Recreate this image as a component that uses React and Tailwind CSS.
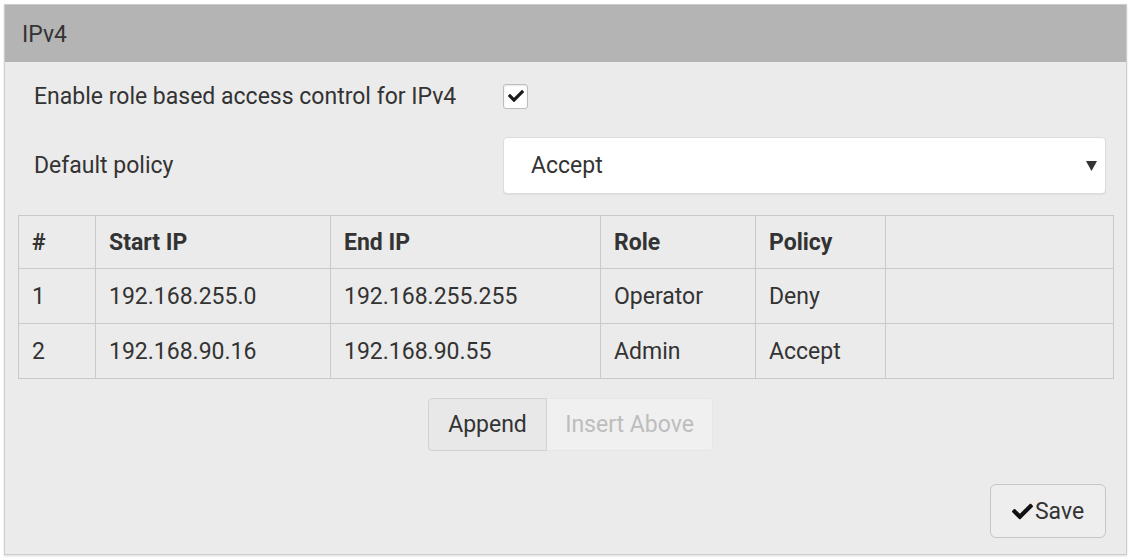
import React from 'react';

const rows = [
  { id: 1, start: '192.168.255.0', end: '192.168.255.255', role: 'Operator', policy: 'Deny' },
  { id: 2, start: '192.168.90.16', end: '192.168.90.55', role: 'Admin', policy: 'Accept' },
];

function CheckIcon({ className }) {
  // heavy check mark, font-awesome style
  return (
    <svg viewBox="0 0 512 512" className={className} fill="currentColor">
      <path d="M173.9 439.4l-166.4-166.4c-10-10-10-26.2 0-36.2l36.2-36.2c10-10 26.2-10 36.2 0L192 312.7 432.1 72.6c10-10 26.2-10 36.2 0l36.2 36.2c10 10 10 26.2 0 36.2l-294.4 294.4c-10 10-26.2 10-36.2 0z" />
    </svg>
  );
}

export default function App() {
  const cell = 'border border-[#c9c9c9] px-[13px] text-left align-middle';

  return (
    <div className="w-[1131px] h-[559px] bg-white p-[4px] text-[#333] font-['Roboto',sans-serif] text-[23px] leading-none">
      <div className="h-full flex flex-col border border-[#cdcdcd] bg-[#ebebeb] shadow-[0_1px_2px_rgba(0,0,0,0.15)]">
        {/* panel title */}
        <div className="h-[57px] shrink-0 bg-[#b4b4b4] flex items-center px-[17px] pt-[2px] text-[#333]">IPv4</div>

        <div className="flex flex-col px-[13px]">
          {/* enable toggle */}
          <div className="grid grid-cols-[469px_1fr] items-center h-[68px] pl-[16px] pr-[7px]">
            <span>Enable role based access control for IPv4</span>
            <div className="w-[25px] h-[25px] bg-white border border-[#bdbdbd] rounded-[3px] flex items-center justify-center shadow-[inset_0_1px_2px_rgba(0,0,0,0.1)]">
              <CheckIcon className="w-[16px] h-[16px] text-[#1a1a1a]" />
            </div>
          </div>

          {/* default policy */}
          <div className="grid grid-cols-[469px_1fr] items-center pl-[16px] pr-[7px] h-[57px] mt-[7px]">
            <span>Default policy</span>
            <div className="h-[57px] bg-white rounded-[4px] border border-[#dcdcdc] flex items-center justify-between pl-[27px] pr-[8px] shadow-[0_1px_1px_rgba(0,0,0,0.06)]">
              <span>Accept</span>
              <svg viewBox="0 0 10 9" className="w-[11px] h-[10px] text-[#333]" fill="currentColor">
                <path d="M0 0h10L5 9z" />
              </svg>
            </div>
          </div>

          {/* ip rules */}
          <table className="mt-[21px] w-[1096px] border-collapse">
            <thead>
              <tr className="h-[53px] font-bold">
                <th className={`${cell} w-[77px]`}>#</th>
                <th className={`${cell} w-[235px]`}>Start IP</th>
                <th className={`${cell} w-[270px]`}>End IP</th>
                <th className={`${cell} w-[155px]`}>Role</th>
                <th className={`${cell} w-[130px]`}>Policy</th>
                <th className={cell}></th>
              </tr>
            </thead>
            <tbody>
              {rows.map((r) => (
                <tr key={r.id} className="h-[55px]">
                  <td className={cell}>{r.id}</td>
                  <td className={cell}>{r.start}</td>
                  <td className={cell}>{r.end}</td>
                  <td className={cell}>{r.role}</td>
                  <td className={cell}>{r.policy}</td>
                  <td className={cell}></td>
                </tr>
              ))}
            </tbody>
          </table>

          {/* row actions */}
          <div className="flex justify-center mt-[19px]">
            <div className="flex h-[53px] ml-[10px]">
              <button className="w-[119px] bg-[#e8e8e8] border border-[#d2d2d2] rounded-l-[4px]">Append</button>
              <button className="w-[166px] bg-[#f0f0f0] border border-l-0 border-[#e6e6e6] text-[#bdbdbd] rounded-r-[4px]">Insert Above</button>
            </div>
          </div>

          <div className="flex justify-end mt-[33px] pr-[7px]">
            <button className="w-[116px] h-[54px] flex items-center justify-center gap-[2px] bg-[#eeeeee] border border-[#c6c6c6] rounded-[6px]">
              <CheckIcon className="w-[21px] h-[21px] text-[#111]" />
              <span>Save</span>
            </button>
          </div>
        </div>
      </div>
    </div>
  );
}
